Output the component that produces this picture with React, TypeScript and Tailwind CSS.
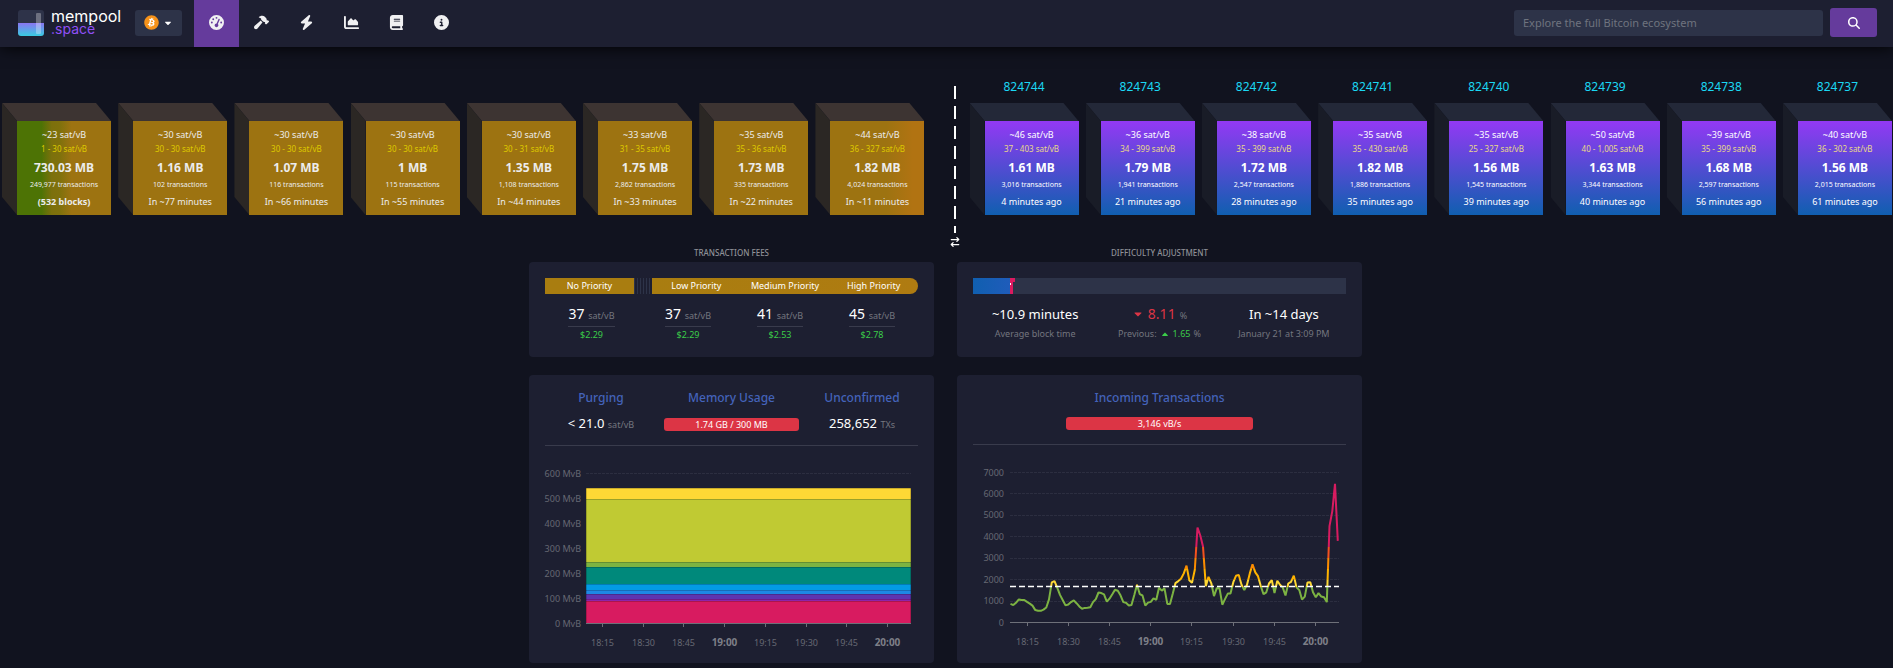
import type {ReactNode} from "react";
import {FaBitcoin, FaCaretDown, FaCaretUp} from "react-icons/fa";
import {
    FaArrowRightArrowLeft,
    FaBolt,
    FaBook,
    FaChartArea,
    FaCircleInfo,
    FaGaugeHigh,
    FaHammer,
    FaMagnifyingGlass,
} from "react-icons/fa6";

type Block = {
    height?: string;
    median: string;
    range: string;
    size: string;
    txs: string;
    time: string;
    face?: string;
};

const GOLD = "bg-[#9d7311]";

const mempoolBlocks: Block[] = [
    {
        median: "~23", range: "1 - 30", size: "730.03 MB", txs: "249,977", time: "(532 blocks)",
        face: "bg-[linear-gradient(to_right,#4d7305_26%,#7c700c_37%,#80710c_46%,#9d7311_58%)]",
    },
    {median: "~30", range: "30 - 30", size: "1.16 MB", txs: "102", time: "In ~77 minutes"},
    {median: "~30", range: "30 - 30", size: "1.07 MB", txs: "116", time: "In ~66 minutes"},
    {median: "~30", range: "30 - 30", size: "1 MB", txs: "115", time: "In ~55 minutes"},
    {median: "~30", range: "30 - 31", size: "1.35 MB", txs: "1,108", time: "In ~44 minutes"},
    {median: "~33", range: "31 - 35", size: "1.75 MB", txs: "2,862", time: "In ~33 minutes"},
    {median: "~35", range: "35 - 36", size: "1.73 MB", txs: "335", time: "In ~22 minutes"},
    {
        median: "~44", range: "36 - 327", size: "1.82 MB", txs: "4,024", time: "In ~11 minutes",
        face: "bg-[linear-gradient(to_right,#9d7311_60%,#b17312_88%)]",
    },
];

const minedBlocks: Block[] = [
    {height: "824744", median: "~46", range: "37 - 403", size: "1.61 MB", txs: "3,016", time: "4 minutes ago"},
    {height: "824743", median: "~36", range: "34 - 399", size: "1.79 MB", txs: "1,941", time: "21 minutes ago"},
    {height: "824742", median: "~38", range: "35 - 399", size: "1.72 MB", txs: "2,547", time: "28 minutes ago"},
    {height: "824741", median: "~35", range: "35 - 430", size: "1.82 MB", txs: "1,886", time: "35 minutes ago"},
    {height: "824740", median: "~35", range: "25 - 327", size: "1.56 MB", txs: "1,545", time: "39 minutes ago"},
    {height: "824739", median: "~50", range: "40 - 1,005", size: "1.63 MB", txs: "3,344", time: "40 minutes ago"},
    {height: "824738", median: "~39", range: "35 - 399", size: "1.68 MB", txs: "2,597", time: "56 minutes ago"},
    {height: "824737", median: "~40", range: "36 - 302", size: "1.56 MB", txs: "2,015", time: "61 minutes ago"},
];

const navItems = [
    {label: "Dashboard", Icon: FaGaugeHigh, active: true},
    {label: "Mining", Icon: FaHammer},
    {label: "Lightning", Icon: FaBolt},
    {label: "Graphs", Icon: FaChartArea},
    {label: "Docs", Icon: FaBook},
    {label: "About", Icon: FaCircleInfo},
];

const times = ["18:15", "18:30", "18:45", "19:00", "19:15", "19:30", "19:45", "20:00"];

// vB/s, one sample per minute
const incoming = [
    870, 810, 920, 1080, 1050, 1050, 960, 880, 790, 580, 550, 545, 600, 700, 1080, 1870, 1930, 1620, 1290, 1040,
    800, 840, 950, 1030, 900, 750, 640, 680, 690, 710, 950, 1090, 1400, 1370, 1310, 970, 1110, 1320, 1530, 1480,
    1270, 950, 920, 800, 820, 1290, 1760, 1320, 1260, 790, 930, 960, 1130, 1060, 1620, 1490, 1590, 870, 870, 1350,
    1840, 1930, 2040, 2290, 2650, 1970, 1850, 2460, 4430, 4060, 3540, 1700, 2130, 1830, 1230, 1600, 1600, 830, 1090, 1350,
    1350, 1880, 2180, 2220, 1760, 1510, 1760, 2290, 2710, 2340, 2160, 1700, 1320, 1410, 1820, 1980, 1370, 1950, 1760, 1630,
    1260, 1820, 1900, 2190, 1640, 1510, 1070, 1210, 1870, 1880, 1410, 1180, 1370, 1210, 1180, 950, 4500, 5200, 6470, 3810,
];

// top edge and height of each fee band, from the highest fees down
const bands = [
    {y: 29, h: 11, fill: "#fdd835"},
    {y: 40, h: 63, fill: "#c0ca33"},
    {y: 103, h: 5, fill: "#7cb342"},
    {y: 108, h: 17, fill: "#00897b"},
    {y: 125, h: 6, fill: "#039be5"},
    {y: 131, h: 4, fill: "#1e88e5"},
    {y: 135, h: 5, fill: "#5e35b1"},
    {y: 140, h: 2, fill: "#8e24aa"},
    {y: 142, h: 22, fill: "#d81b60"},
];

const Cube = ({block, mined = false}: {block: Block; mined?: boolean}) => (
    <a href="#" className="block shrink-0 text-center">
        <div className="mb-1.5 h-5 text-[12px] leading-5 text-[#1bd8f4]">{block.height}</div>
        <div className="grid grid-cols-[15px_94px] grid-rows-[18px_94px]">
            <div
                className={`col-span-2 col-start-1 row-start-1 [clip-path:polygon(0_0,94px_0,100%_100%,15px_100%)] ${mined ? "bg-[#232838]" : "bg-[#3d3432]"}`}
            />
            <div
                className={`col-start-1 row-span-2 row-start-1 [clip-path:polygon(0_0,100%_18px,100%_100%,0_94px)] ${mined ? "bg-[#191c27]" : "bg-[#2b2724]"}`}
            />
            <div
                className={`col-start-2 row-start-2 flex flex-col items-center whitespace-nowrap pt-[6px] ${mined ? "bg-[linear-gradient(#9339f4,#105fb0)] text-white" : `${block.face ?? GOLD} text-[#ececec]`}`}
            >
                <div className="text-[9px] leading-[15px]">{block.median} sat/vB</div>
                <div className={`text-[8px] leading-[14px] ${mined ? "text-[#ead98a]" : "text-[#ddc900]"}`}>
                    {block.range} sat/vB
                </div>
                <div className="mt-[2px] text-[12px] font-bold leading-[20px]">{block.size}</div>
                <div className="text-[7px] leading-[14px]">{block.txs} transactions</div>
                <div className={`mt-[2px] text-[9px] leading-[16px] ${block.time.startsWith("(") ? "font-bold" : ""}`}>
                    {block.time}
                </div>
            </div>
        </div>
    </a>
);

const Card = ({children, className = ""}: {children: ReactNode; className?: string}) => (
    <div className={`rounded bg-[#1d1f31] px-4 ${className}`}>{children}</div>
);

const Fee = ({fee, usd}: {fee: number; usd: string}) => (
    <div className="flex flex-col items-center">
        <div className="h-[25px] border-b border-[#393b4c] text-[14px] leading-[24px]">
            {fee} <span className="text-[9px] leading-none text-[#74767f]">sat/vB</span>
        </div>
        <div className="text-[9px] leading-[15px] text-[#3bcc49]">{usd}</div>
    </div>
);

const TimeAxis = ({left, step, y}: {left: number; step: number; y: number}) => (
    <>
        {times.map((t, i) => {
            const bold = t.endsWith(":00");
            const x = Math.round(left + i * step) + 0.5;
            return (
                <g key={t}>
                    <path d={`M${x} ${y}v3`} stroke="#6e7079"/>
                    <text
                        x={x}
                        y={y + 22}
                        textAnchor="middle"
                        fontSize={bold ? 10 : 9}
                        fontWeight={bold ? 700 : 400}
                        fill={bold ? "#7d7f88" : "#666873"}
                    >
                        {t}
                    </text>
                </g>
            );
        })}
    </>
);

const MempoolChart = () => (
    <svg viewBox="0 0 373 201" className="block w-full overflow-visible" role="img" aria-label="Mempool by vBytes">
        <path d="M41 14.5H366" stroke="#2c2e40" strokeDasharray="3 1"/>
        {[600, 500, 400, 300, 200, 100, 0].map((v, i) => (
            <text key={v} x="36" y={18 + i * 25} textAnchor="end" fontSize="9" fill="#666873">{v} MvB</text>
        ))}
        {bands.map((b) => (
            <g key={b.y}>
                <rect x="41" y={b.y} width="325" height={b.h} fill={b.fill}/>
                <path d={`M41 ${b.y + 0.5}H366`} stroke="#000" strokeOpacity="0.2"/>
            </g>
        ))}
        <path d="M41.5 29V164M365.5 29V164" stroke="#000" strokeOpacity="0.2"/>
        <path d="M41 164.5H366" stroke="#6e7079"/>
        <TimeAxis left={57} step={40.7} y={165}/>
    </svg>
);

const IncomingChart = () => {
    const y = (v: number) => 164.5 - (v * 150) / 7000;
    const points = incoming.map((v, i) => `${(37.5 + i * 2.75).toFixed(1)},${y(v).toFixed(1)}`).join(" ");
    // hard colour steps, as fractions of the 0-7000 scale
    const steps: [number, number, string][] = [
        [0, 1667, "#7cb342"],
        [1667, 2000, "#fdd835"],
        [2000, 2500, "#ffb300"],
        [2500, 3000, "#fb8c00"],
        [3000, 3500, "#f4511e"],
        [3500, 7000, "#d81b60"],
    ];
    return (
        <svg viewBox="0 0 373 201" className="block w-full" role="img" aria-label="Incoming transactions">
            <defs>
                <linearGradient id="rate" gradientUnits="userSpaceOnUse" x1="0" x2="0" y1={y(0)} y2={y(7000)}>
                    {steps.flatMap(([from, to, color]) => [
                        <stop key={`${from}a`} offset={from / 7000} stopColor={color}/>,
                        <stop key={`${from}b`} offset={to / 7000} stopColor={color}/>,
                    ])}
                </linearGradient>
            </defs>
            {[7000, 6000, 5000, 4000, 3000, 2000, 1000, 0].map((v) => (
                <g key={v}>
                    {v > 0 && (
                        <path d={`M37 ${Math.floor(y(v)) + 0.5}H366`} stroke="#2c2e40" strokeDasharray="3 1"/>
                    )}
                    <text x="31" y={y(v) + 3} textAnchor="end" fontSize="9" fill="#666873">{v}</text>
                </g>
            ))}
            <path d="M37 164.5H366" stroke="#6e7079"/>
            <TimeAxis left={54} step={41.1} y={165}/>
            <polyline points={points} fill="none" stroke="url(#rate)" strokeWidth="2" strokeLinejoin="bevel"/>
            <path d="M37 128.5H366" stroke="#fff" strokeWidth="1.5" strokeDasharray="6 3"/>
        </svg>
    );
};

const Navbar = () => (
    <nav className="flex h-[47px] items-center bg-[#1d1f31] shadow-[0_0_15px_0_#000]">
        <a href="#" className="ml-[18px] flex items-center gap-[7px] pb-[2px]">
            <svg width="26" height="26" viewBox="0 0 26 26" aria-hidden="true">
                <defs>
                    <linearGradient id="water" x1="0" x2="0" y1="0" y2="1">
                        <stop offset="0" stopColor="#8a76f2"/>
                        <stop offset="1" stopColor="#38cbe0"/>
                    </linearGradient>
                </defs>
                <path d="M3 0h20a3 3 0 0 1 3 3v11H0V3a3 3 0 0 1 3-3z" fill="#2e3349"/>
                <path d="M0 13h26v10a3 3 0 0 1-3 3H3a3 3 0 0 1-3-3z" fill="url(#water)"/>
                <rect x="18" y="3" width="5" height="21" rx="1" fill="#fff" fillOpacity="0.3"/>
            </svg>
            <div className="w-[73px] font-['Inter',sans-serif]">
                <div className="text-[16px] leading-[12px] text-white">mempool</div>
                <div className="text-[14px] leading-[14px] text-[#9050f5]">.space</div>
            </div>
        </a>
        <button
            aria-label="Network"
            className="mb-[2px] ml-[11px] flex h-[26px] w-[47px] items-center justify-center gap-1 rounded-[3px] bg-[#2d3348] text-white"
        >
            <span className="rounded-full bg-[radial-gradient(#fff_50%,transparent_55%)]">
                <FaBitcoin size={15} className="text-[#f7931a]"/>
            </span>
            <FaCaretDown size={10}/>
        </button>
        <ul className="ml-3 flex">
            {navItems.map(({label, Icon, active}) => (
                <li key={label}>
                    <a
                        href="#"
                        aria-label={label}
                        className={`flex h-[47px] w-[45px] items-center justify-center pb-[2px] text-[#f0f0f2] ${active ? "bg-[#653b9c]" : ""}`}
                    >
                        <Icon size={15}/>
                    </a>
                </li>
            ))}
        </ul>
        <form className="mb-[2px] ml-auto mr-4 flex items-center gap-[7px]">
            <input
                type="text"
                aria-label="Search"
                placeholder="Explore the full Bitcoin ecosystem"
                className="h-[26px] w-[309px] rounded-[3px] bg-[#2d3348] px-[9px] text-[11px] text-white placeholder:text-[#6f747f]"
            />
            <button
                type="button"
                aria-label="Search"
                className="flex h-[29px] w-[47px] items-center justify-center rounded-[3px] bg-[#653b9c] text-white"
            >
                <FaMagnifyingGlass size={12}/>
            </button>
        </form>
    </nav>
);

const sectionLabel = "mb-[3px] text-center text-[8px] font-medium uppercase leading-3 text-[#8f9097]";
const cardTitle = "block text-[12px] font-medium leading-5 text-[#4463ba]";
const stat = "text-[13px] leading-[24px]";
const sub = "text-[9px] leading-4 text-[#74767f]";
const pill = "mx-auto h-[13px] rounded-[3px] bg-[#dc3545] text-[9px] leading-[13px]";

const App = () => (
    <div className="min-h-screen overflow-hidden bg-[#11131f] font-['Noto_Sans',sans-serif] text-white">
        <Navbar/>

        <section className="flex h-[200px] pl-[2px] pr-[1px] pt-[30px]">
            <div className="flex flex-1 justify-between">
                {mempoolBlocks.map((b) => <Cube key={b.time} block={b}/>)}
            </div>
            <div className="flex w-[45px] shrink-0 flex-col items-center pl-[16px] pt-[9px]">
                <div className="h-[147px] w-[2px] shrink-0 bg-[repeating-linear-gradient(#fff_0_13px,transparent_13px_20px)]"/>
                <button aria-label="Flip direction" className="mt-1">
                    <FaArrowRightArrowLeft size={10}/>
                </button>
            </div>
            <div className="flex flex-1 justify-between">
                {minedBlocks.map((b) => <Cube key={b.height} block={b} mined/>)}
            </div>
        </section>

        <main className="mx-auto grid max-w-[835px] grid-cols-2 gap-x-[23px] gap-y-[18px] pr-[2px]">
            <div>
                <div className={sectionLabel}>Transaction Fees</div>
                <Card className="h-[95px] pt-4">
                    <div className="flex h-4 text-center text-[9px] leading-4">
                        <div className="w-[89px] bg-[#a97d10]">No Priority</div>
                        <div className="w-[18px] bg-[repeating-linear-gradient(to_right,#2d3348_0_1px,transparent_1px_3px)]"/>
                        <div className="grid flex-1 grid-cols-3 rounded-r-full bg-[linear-gradient(to_right,#a97d10,#af7b11)]">
                            <div>Low Priority</div>
                            <div>Medium Priority</div>
                            <div>High Priority</div>
                        </div>
                    </div>
                    <div className="mt-2 grid grid-cols-[97px_1fr_1fr_1fr]">
                        <div className="pr-1"><Fee fee={37} usd="$2.29"/></div>
                        <Fee fee={37} usd="$2.29"/>
                        <Fee fee={41} usd="$2.53"/>
                        <Fee fee={45} usd="$2.78"/>
                    </div>
                </Card>
            </div>

            <div>
                <div className={sectionLabel}>Difficulty Adjustment</div>
                <Card className="h-[95px] pt-4">
                    <svg className="block h-4 w-full bg-[#2d3348]" role="img" aria-label="Epoch progress">
                        <defs>
                            <linearGradient id="epoch">
                                <stop offset="0" stopColor="#105fb0"/>
                                <stop offset="1" stopColor="#1f5cba"/>
                            </linearGradient>
                        </defs>
                        <rect width="37" height="16" fill="url(#epoch)"/>
                        <path d="M37 0h5v4h-2v12h-3z" fill="#dc1a60"/>
                        <rect x="37" y="5" width="1" height="2" fill="#fff"/>
                    </svg>
                    <div className="mt-2 grid grid-cols-3 text-center">
                        <div>
                            <div className={stat}>~10.9 minutes</div>
                            <div className={sub}>Average block time</div>
                        </div>
                        <div>
                            <div className={`${stat} flex h-6 items-baseline justify-center gap-1 text-[#dc3545]`}>
                                <FaCaretDown size={12} className="self-center"/>
                                <span className="text-[14px]">8.11</span>
                                <span className="text-[9px] text-[#74767f]">%</span>
                            </div>
                            <div className={`${sub} flex items-center justify-center gap-[3px]`}>
                                Previous: <FaCaretUp size={10} className="text-[#3bcc49]"/>
                                <span className="text-[#3bcc49]">1.65</span> %
                            </div>
                        </div>
                        <div>
                            <div className={stat}>In ~14 days</div>
                            <div className={sub}>January 21 at 3:09 PM</div>
                        </div>
                    </div>
                </Card>
            </div>

            <Card className="pb-[3px] pt-[13px]">
                <div className="grid h-[57px] grid-cols-[112px_1fr_112px] text-center">
                    <div>
                        <a href="#" className={cardTitle}>Purging</a>
                        <div className={`${stat} mt-[3px]`}>&lt; 21.0 <span className={sub}>sat/vB</span></div>
                    </div>
                    <div>
                        <a href="#" className={cardTitle}>Memory Usage</a>
                        <div className={`${pill} mt-[10px] w-[135px]`}>1.74 GB / 300 MB</div>
                    </div>
                    <div>
                        <a href="#" className={cardTitle}>Unconfirmed</a>
                        <div className={`${stat} mt-[3px]`}>258,652 <span className={sub}>TXs</span></div>
                    </div>
                </div>
                <hr className="mb-[13px] border-[#393b4c]"/>
                <MempoolChart/>
            </Card>

            <Card className="pb-[3px] pt-[13px]">
                <div className="h-[56px] text-center">
                    <a href="#" className={cardTitle}>Incoming Transactions</a>
                    <div className={`${pill} mt-[9px] w-1/2`}>3,146 vB/s</div>
                </div>
                <hr className="mb-[13px] border-[#393b4c]"/>
                <IncomingChart/>
            </Card>
        </main>
    </div>
);

export default App;
